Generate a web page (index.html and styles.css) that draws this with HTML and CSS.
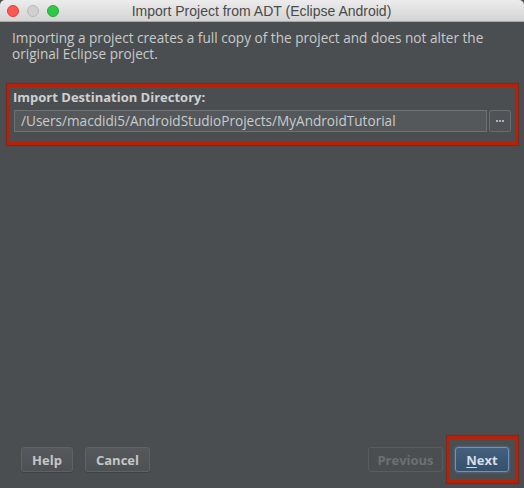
FILE: index.html
```html
<!DOCTYPE html>
<html>
<head>
<meta charset="utf-8">
<link rel="stylesheet" href="styles.css">
</head>
<body>
<div class="window">
  <div class="titlebar">
    <div class="lights">
      <span class="light red"></span>
      <span class="light grey"></span>
      <span class="light green"></span>
    </div>
    <div class="title">Import Project from ADT (Eclipse Android)</div>
  </div>
  <div class="content">
    <p class="desc">Importing a project creates a full copy of the project and does not alter the original Eclipse project.</p>
    <div class="annot-box">
      <div class="label">Import Destination Directory:</div>
      <div class="field-row">
        <div class="field">/Users/macdidi5/AndroidStudioProjects/MyAndroidTutorial</div>
        <div class="browse"><span></span><span></span><span></span></div>
      </div>
    </div>
  </div>
  <div class="footer">
    <div class="group">
      <button class="btn help">Help</button>
      <button class="btn cancel">Cancel</button>
    </div>
    <div class="group">
      <button class="btn prev" disabled>Previous</button>
      <button class="btn next"><u>N</u>ext</button>
    </div>
  </div>
</div>
</body>
</html>
```

FILE: styles.css
```css
html, body {
  margin: 0;
  padding: 0;
  background: #4b4e50;
}
.window {
  width: 524px;
  height: 488px;
  display: flex;
  flex-direction: column;
  background: #4b4e50;
  font-family: "Open Sans", "Liberation Sans", sans-serif;
  color: #c9c9c9;
}
.titlebar {
  height: 22px;
  box-sizing: border-box;
  border-bottom: 1px solid #a9a9a9;
  background: linear-gradient(#ececec, #d4d4d4);
  display: flex;
  align-items: center;
  position: relative;
  border-radius: 5px 5px 0 0;
}
.lights {
  display: flex;
  gap: 8px;
  padding-left: 7px;
}
.light {
  width: 12px;
  height: 12px;
  border-radius: 50%;
  box-sizing: border-box;
}
.light.red { background: #fc5753; border: 1px solid #de3f3a; }
.light.grey { background: #d0d0d0; border: 1px solid #b8b8b8; }
.light.green { background: #33c748; border: 1px solid #27a93a; }
.title {
  flex: 1;
  text-align: center;
  margin-left: -60px;
  font-family: "Liberation Sans", sans-serif;
  font-size: 14px;
  color: #4a4a4a;
}
.content {
  padding: 0 0 0 7px;
}
.desc {
  margin: 8px 0 0 5px;
  font-size: 13.6px;
  line-height: 16px;
  width: 500px;
  color: #c8cacb;
}
.annot-box {
  margin-top: 22px;
  width: 511px;
  height: 61px;
  box-sizing: border-box;
  border: 3px solid #b82008;
  box-shadow: 0 0 1px 1px rgba(150, 20, 0, 0.6);
  padding: 2px 3px 0 4px;
}
.label {
  font-weight: bold;
  font-size: 13px;
  line-height: 16px;
  margin-left: -1px;
  color: #cfd0d0;
}
.field-row {
  display: flex;
  gap: 2px;
  margin-top: 5px;
}
.field {
  width: 473px;
  height: 22px;
  box-sizing: border-box;
  border: 1px solid #6f7274;
  background: #54585a;
  font-size: 13.6px;
  line-height: 20px;
  padding-left: 6px;
  color: #c9cbcc;
}
.browse {
  width: 22px;
  height: 22px;
  box-sizing: border-box;
  border: 1px solid #6a6d6f;
  border-radius: 2px;
  background: #505355;
  display: flex;
  align-items: center;
  justify-content: center;
  gap: 1px;
}
.browse span {
  width: 2px;
  height: 2px;
  background: #b0b2b3;
}
.footer {
  margin-top: auto;
  height: 41px;
  display: flex;
  justify-content: space-between;
  padding: 0 15px 0 21px;
}
.group {
  display: flex;
  gap: 12px;
  height: 25px;
}
.btn {
  height: 25px;
  box-sizing: border-box;
  border: 1px solid #5f6264;
  border-radius: 3px;
  background: linear-gradient(#56595b, #4e5153);
  color: #c4c6c7;
  font-family: "Open Sans", "Liberation Sans", sans-serif;
  font-size: 13px;
  font-weight: bold;
  padding: 0;
  box-shadow: 0 1px 0 rgba(0,0,0,0.15);
}
.help { width: 52px; }
.cancel { width: 65px; }
.prev {
  width: 75px;
  color: #6c7072;
  background: #4b4e50;
  border-color: #5a5d5f;
  box-shadow: none;
}
.next {
  width: 54px;
  position: relative;
  background: linear-gradient(#43607f, #36506c);
  border-color: #6b93bd;
  color: #d6dde4;
  box-shadow: 0 0 2px 1px rgba(90, 140, 200, 0.35);
}
.next u {
  text-underline-offset: 2px;
}
.next::after {
  content: "";
  position: absolute;
  left: -9px;
  top: -12px;
  width: 71px;
  height: 47px;
  box-sizing: border-box;
  border: 3px solid #b82008;
  box-shadow: 0 0 1px 1px rgba(150, 20, 0, 0.6);
}
```
